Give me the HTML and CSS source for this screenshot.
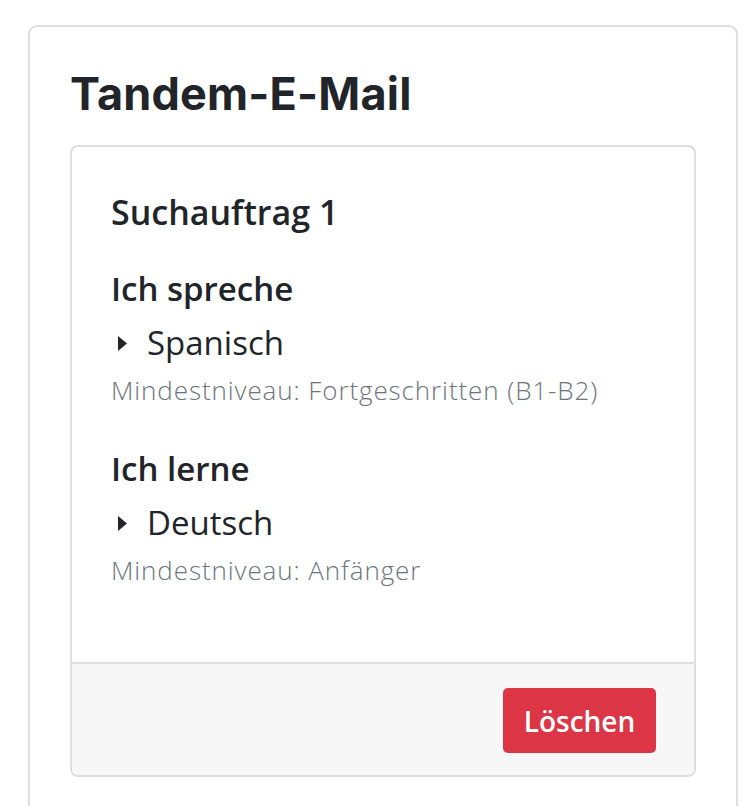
FILE: index.html
```html
<!DOCTYPE html>
<html lang="de">
<head>
    <meta charset="UTF-8">
    <meta name="viewport" content="width=device-width, initial-scale=1.0">
    <title>Tandem-E-Mail</title>
    <link rel="stylesheet" href="styles.css">
</head>
<body>
    <div class="seite">
        <div class="rahmen">
            <h1 class="titel">Tandem-E-Mail</h1>

            <div class="auftrag">
                <div class="auftrag-body">
                    <h2 class="auftrag-titel">Suchauftrag 1</h2>

                    <div class="sprache-block">
                        <h3 class="sprache-label">Ich spreche</h3>
                        <div class="sprache">
                            <svg class="pfeil" width="9" height="15" viewBox="0 0 9 15"><polygon points="0,0 9,7.5 0,15" fill="#212529"/></svg>
                            <span>Spanisch</span>
                        </div>
                        <div class="niveau">Mindestniveau: Fortgeschritten (B1-B2)</div>
                    </div>

                    <div class="sprache-block">
                        <h3 class="sprache-label">Ich lerne</h3>
                        <div class="sprache">
                            <svg class="pfeil" width="9" height="15" viewBox="0 0 9 15"><polygon points="0,0 9,7.5 0,15" fill="#212529"/></svg>
                            <span>Deutsch</span>
                        </div>
                        <div class="niveau">Mindestniveau: Anfänger</div>
                    </div>
                </div>
                <div class="auftrag-footer">
                    <button class="btn-loeschen">Löschen</button>
                </div>
            </div>
        </div>
    </div>
</body>
</html>
```

FILE: styles.css
```css
:root {
    --text-color: #212529;
    --grau: #6c757d;
    --rand: #dedede;
    --footer-bg: #f7f7f7;
    --rot: #dc3545;
}

body {
    margin: 0;
    background-color: #fff;
    color: var(--text-color);
    font-family: "Open Sans", "Noto Sans", sans-serif;
}

.seite {
    padding: 25px 18px 0 28px;
}

.rahmen {
    border: 2px solid var(--rand);
    border-radius: 9px;
    padding: 40px 40px 40px 40px;
}

.titel {
    font-family: Inter, "Open Sans", sans-serif;
    font-weight: 700;
    font-size: 45px;
    line-height: 54px;
    letter-spacing: 0.2px;
    margin: 0 0 24px 0;
}

.auftrag {
    border: 2px solid var(--rand);
    border-radius: 8px;
    overflow: hidden;
}

.auftrag-body {
    padding: 45px 35px 74px 39px;
}

.auftrag-titel {
    font-size: 34px;
    font-weight: 600;
    line-height: 40px;
    margin: 0 0 37px 0;
}

.sprache-block {
    margin-bottom: 41px;
}

.sprache-block:last-child {
    margin-bottom: 0;
}

.sprache-label {
    font-size: 33px;
    font-weight: 600;
    line-height: 40px;
    margin: 0 0 12px 0;
}

.sprache {
    display: flex;
    align-items: center;
    gap: 20px;
    font-size: 33px;
    line-height: 44px;
}

.pfeil {
    margin-left: 7px;
}

.niveau {
    color: var(--grau);
    font-size: 26px;
    font-weight: 300;
    letter-spacing: 0.9px;
    line-height: 36px;
    margin-top: 7px;
}

.auftrag-footer {
    background-color: var(--footer-bg);
    border-top: 2px solid var(--rand);
    padding: 24px 38px 22px 35px;
    display: flex;
    justify-content: flex-end;
}

.btn-loeschen {
    background-color: var(--rot);
    color: #fff;
    border: none;
    border-radius: 5px;
    font-family: "Open Sans", "Noto Sans", sans-serif;
    font-size: 28px;
    font-weight: 600;
    width: 153px;
    height: 65px;
    padding: 0;
}
```
